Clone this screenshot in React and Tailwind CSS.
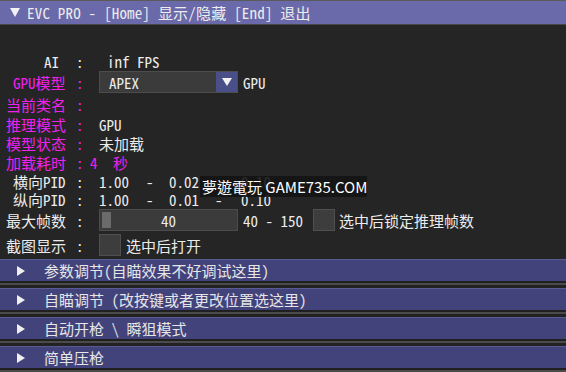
import React from 'react';

// Row of the settings panel: label column, colon, then the value area at x=99
function Row({ label, labelClass = 'text-[#ececec]', pad = 'pl-[6px]', h = 'h-[19px]', className = '', children }) {
  return (
    <div className={`flex items-center ${h} ${className}`}>
      <span className={`w-[74px] shrink-0 whitespace-pre ${pad} ${labelClass}`}>{label}</span>
      <span className={`w-[25px] shrink-0 pl-[2px] ${labelClass}`}>:</span>
      {children}
    </div>
  );
}

function Checkbox() {
  return <div className="w-[22px] h-[22px] shrink-0 bg-[#3d3d3d] border border-[#4f4f4f]" />;
}

function Header({ title }) {
  return (
    <div>
      <div className="h-[22px] bg-[#43437b] border-t border-[#5a5a95] flex items-center text-[#e6e6e6]">
        <span className="w-[44px] shrink-0 pl-[17px] flex items-center">
          <svg width="8" height="10" viewBox="0 0 8 10">
            <polygon points="0,0 8,5 0,10" fill="#f0f0f0" />
          </svg>
        </span>
        <span className="whitespace-pre">{title}</span>
      </div>
      <div className="h-[2px] bg-[#202020]" />
      <div className="h-[2px] bg-[#4b4b4b]" />
      <div className="h-[3px] bg-[#222222]" />
    </div>
  );
}

export default function App() {
  const magenta = 'text-[#ee22ee]';
  const headers = [
    '参数调节(自瞄效果不好调试这里)',
    '自瞄调节 (改按键或者更改位置选这里)',
    '自动开枪 \\ 瞬狙模式',
    '简单压枪',
  ];

  return (
    <div className="relative w-[566px] h-[372px] overflow-hidden bg-[#252525] text-[15px] leading-none text-[#ececec] font-['Noto_Sans_Mono_CJK_SC','Noto_Sans_CJK_SC','DejaVu_Sans_Mono',monospace]">
      {/* title bar */}
      <div className="h-px bg-[#5a5a5a]" />
      <div className="h-[23px] bg-[#6a69a9] flex items-center pl-[10px] text-[#ededed] whitespace-pre">
        <svg width="10" height="9" viewBox="0 0 10 9" className="mr-[7px]">
          <polygon points="0,0 10,0 5,9" fill="#f2f2f2" />
        </svg>
        <span className="tracking-[0.2px]">EVC PRO - [Home] 显示/隐藏 [End] 退出</span>
      </div>
      <div className="h-px bg-[#474747]" />

      <div className="pt-[27px]">
        <div className="flex items-center h-[19px]">
          <span className="w-[74px] shrink-0 pl-[44px]">AI</span>
          <span className="w-[33px] shrink-0 pl-[2px]">:</span>
          <span className="whitespace-pre">inf FPS</span>
        </div>

        <Row label="GPU模型" labelClass={magenta} pad="pl-[13px]" h="h-[22px]">
          <div className="w-[139px] h-[22px] flex bg-[#3b3b3b] border border-[#4c4c4c]">
            <span className="flex-1 flex items-center pl-[9px]">APEX</span>
            <span className="w-[21px] bg-[#4a5087] flex items-center justify-center">
              <svg width="10" height="8" viewBox="0 0 10 8">
                <polygon points="0,0 10,0 5,8" fill="#f2f2f2" />
              </svg>
            </span>
          </div>
          <span className="ml-[5px]">GPU</span>
        </Row>

        <Row label="当前类名" labelClass={magenta} h="h-[20px]" className="mt-px" />
        <Row label="推理模式" labelClass={magenta} h="h-[20px]">
          <span>GPU</span>
        </Row>
        <Row label="模型状态" labelClass={magenta}>
          <span>未加载</span>
        </Row>
        <div className={`flex items-center h-[19px] ${magenta}`}>
          <span className="w-[74px] shrink-0 pl-[6px]">加载耗时</span>
          <span className="w-[16px] shrink-0 pl-[2px]">:</span>
          <span className="w-[23px] shrink-0">4</span>
          <span>秒</span>
        </div>

        <Row label="横向PID" pad="pl-[13px]" h="h-[18px]">
          <span className="w-[47px] shrink-0">1.00</span>
          <span className="w-[23px] shrink-0">-</span>
          <span className="w-[46px] shrink-0">0.02</span>
          <span className="w-[26px] shrink-0">-</span>
          <span>0.10</span>
        </Row>
        <Row label="纵向PID" pad="pl-[13px]">
          <span className="w-[47px] shrink-0">1.00</span>
          <span className="w-[23px] shrink-0">-</span>
          <span className="w-[46px] shrink-0">0.01</span>
          <span className="w-[26px] shrink-0">-</span>
          <span>0.10</span>
        </Row>

        <Row label="最大帧数" h="h-[22px]">
          <div className="relative w-[139px] h-[22px] flex items-center justify-center bg-[#3b3b3b] border border-[#4c4c4c]">
            <div className="absolute left-[2px] top-[2px] w-[9px] h-[16px] bg-[#6b6b6b]" />
            <span>40</span>
          </div>
          <span className="ml-[5px] w-[70px] whitespace-pre">40 - 150</span>
          <Checkbox />
          <span className="ml-[4px]">选中后锁定推理帧数</span>
        </Row>

        <Row label="截图显示" h="h-[22px]" className="mt-[3px]">
          <Checkbox />
          <span className="ml-[5px]">选中后打开</span>
        </Row>

        <div className="mt-[3px]">
          {headers.map((t, i) => (
            <Header key={i} title={t} />
          ))}
        </div>
      </div>

      {/* site watermark over the panel */}
      <div className="absolute left-[200px] top-[176px] w-[167px] h-[21px] bg-[#141414]/90 flex items-center pl-[2px] text-white text-[15px] font-['Noto_Sans_CJK_TC','Noto_Sans',sans-serif] whitespace-pre">
        夢遊電玩 GAME735.COM
      </div>
    </div>
  );
}
